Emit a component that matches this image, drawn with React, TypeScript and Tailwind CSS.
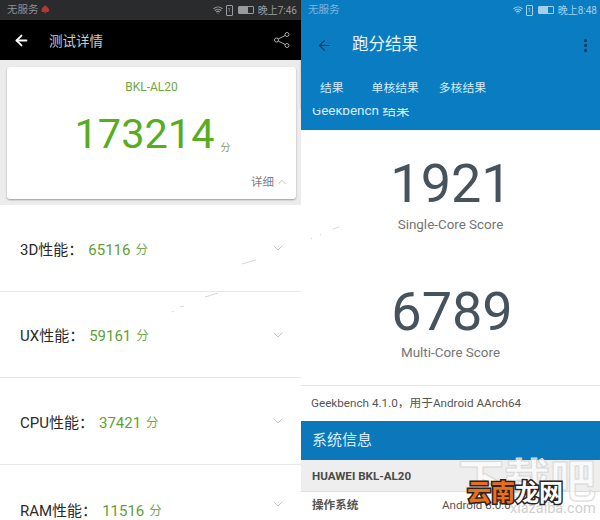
import { ArrowLeft, ChevronDown, ChevronUp, EllipsisVertical, Wifi } from "lucide-react";

const font = "font-['Roboto','Noto_Sans_CJK_SC',sans-serif]";

const rows = [
    { label: "3D性能：", score: "65116", height: "h-[87px]" },
    { label: "UX性能：", score: "59161", height: "h-[86px]" },
    { label: "CPU性能：", score: "37421", height: "h-[87px]" },
    { label: "RAM性能：", score: "11516", height: "h-[55px]" },
];

const StatusIcons = ({ time, tone }: { time: string; tone: string }) => (
    <div className={`flex items-center text-[10px] ${tone}`}>
        <Wifi size={10} strokeWidth={2.5} />
        <span className="ml-[3px] flex h-[11px] w-[7px] items-center justify-center rounded-[1px] border border-current text-[6px] leading-none">
            1
        </span>
        <span className="ml-[5px] flex h-[8px] w-[16px] rounded-[1px] border border-current">
            <span className="w-[9px] bg-current" />
        </span>
        <span className="ml-[4px]">{time}</span>
    </div>
);

const AntutuPanel = () => (
    <div className="flex w-[301px] flex-col">
        <div className="flex h-[20px] items-center justify-between bg-[#2a2b2d] pl-[7px] pr-[4px]">
            <div className="flex items-center gap-[2px] text-[10.5px] text-[#8f9092]">
                <span>无服务</span>
                <span className="text-[9px] leading-none text-[#b23a30]">♠</span>
            </div>
            <StatusIcons time="晚上7:46" tone="text-[#9a9b9d]" />
        </div>
        <div className="flex h-[40px] items-center bg-black pl-[13px] pr-[10px]">
            <ArrowLeft size={17} strokeWidth={2.5} className="text-white" />
            <span className="ml-[19px] flex-1 pt-[2px] text-[13.5px] text-[#c9c9c9]">测试详情</span>
            <svg width="18" height="18" viewBox="0 0 18 18" fill="none" stroke="#a8a8a8" strokeWidth="1">
                <circle cx="3.5" cy="9" r="2" />
                <circle cx="14" cy="3.5" r="2" />
                <circle cx="14" cy="14.5" r="2" />
                <path d="M5.2 8 12.2 4.5M5.2 10 12.2 13.5" />
            </svg>
        </div>
        <div className="bg-[#ececec] pb-[6px] pl-[7px] pr-[5px] pt-[7px]">
            <div className="flex h-[132px] flex-col items-center rounded-[3px] bg-white shadow-[0_1px_2px_rgba(0,0,0,0.35)]">
                <div className="mt-[12px] text-[12px] leading-[16px] text-[#6fa83f]">BKL-AL20</div>
                <div className="mt-[15px] flex items-end gap-[6px] pl-[2px] text-[#57ad1f]">
                    <span className="text-[41.5px] leading-[48px]">173214</span>
                    <span className="mb-[3px] text-[10px] leading-[14px] text-[#87987a]">分</span>
                </div>
                <div className="mt-auto mb-[9px] flex items-center gap-[1px] self-end pr-[7px] text-[11.5px] leading-[16px] text-[#808080]">
                    详细
                    <ChevronUp size={14} strokeWidth={1} className="text-[#999999]" />
                </div>
            </div>
        </div>
        <div className="flex flex-col bg-white">
            {rows.map((row) => (
                <div
                    key={row.label}
                    className={`flex items-center justify-between border-b border-[#e8e8e8] pl-[20px] pr-[15px] last:items-start last:border-b-0 last:pt-[31px] ${row.height}`}>
                    <div className="flex items-center pt-[4px] text-[15px] text-[#2a2a2a]">
                        <span>{row.label}</span>
                        <span className="ml-[5px] text-[#5f9f35]">{row.score}</span>
                        <span className="ml-[5px] text-[12.5px] text-[#78aa55]">分</span>
                    </div>
                    <ChevronDown size={16} strokeWidth={1} className="text-[#aaaaaa]" />
                </div>
            ))}
        </div>
    </div>
);

const GeekbenchPanel = () => (
    <div className="flex w-[299px] flex-col bg-white">
        <div className="bg-[#0a7dc2] shadow-[0_1px_2px_rgba(0,0,0,0.3)]">
            <div className="flex h-[20px] items-center justify-between pl-[7px] pr-[3px]">
                <span className="text-[10.5px] text-[#7ab8df]">无服务</span>
                <StatusIcons time="晚上8:48" tone="text-[#a4d0ec]" />
            </div>
            <div className="flex h-[47px] items-center pl-[15px] pr-[6px] pt-[3px]">
                <ArrowLeft size={17} strokeWidth={1.5} className="text-[#0b3f66]" />
                <span className="ml-[19px] flex-1 text-[16.5px] text-[#e6f3fb]">跑分结果</span>
                <EllipsisVertical size={17} strokeWidth={2.5} className="text-[#0b3556]" />
            </div>
            <div className="flex h-[41px] items-center gap-[20px] pl-[19px] pt-[3px] text-[11.8px] text-[#d3ebf8]">
                <span className="mr-[8px]">结果</span>
                <span>单核结果</span>
                <span>多核结果</span>
            </div>
        </div>
        <div className="flex h-[22px] items-start overflow-hidden bg-[#0a7dc2] pl-[11px]">
            <span className="-mt-[6px] text-[13.5px] leading-[16px] text-[#d8ecf8]">Geekbench 结果</span>
        </div>
        <div className="flex h-[256px] flex-col items-center border-b border-[#e6e6e6]">
            <div className="mt-[23px] pl-[1px] text-[54px] leading-[62px] text-[#46525c]">1921</div>
            <div className="mt-[2px] text-[13.4px] leading-[16px] text-[#757575]">Single-Core Score</div>
            <div className="mt-[48px] pl-[3px] text-[54px] leading-[62px] text-[#46525c]">6789</div>
            <div className="mt-[2px] text-[13.4px] leading-[16px] text-[#757575]">Multi-Core Score</div>
        </div>
        <div className="flex h-[35px] items-center pl-[10px] text-[11.7px] text-[#555555]">
            Geekbench 4.1.0，用于Android AArch64
        </div>
        <div className="flex h-[39px] items-center bg-[#0a78ba] pl-[11px] text-[15px] text-[#d9eefa]">
            系统信息
        </div>
        <div className="flex h-[32px] items-center border-b border-[#dddddd] bg-[#eeeeee] pl-[11px] pt-[2px] text-[11.6px] font-bold text-[#4a4a4a]">
            HUAWEI BKL-AL20
        </div>
        <div className="flex h-[28px] items-center pl-[11px] text-[11.6px] text-[#555555]">
            <span className="w-[130px] font-bold">操作系统</span>
            <span>Android 8.0.0</span>
        </div>
    </div>
);

export default function App() {
    return (
        <div className={`relative flex h-[520px] w-[600px] overflow-hidden ${font}`}>
            <AntutuPanel />
            <GeekbenchPanel />
            {/* scratches left over across the seam of the two screenshots */}
            <svg className="absolute left-[150px] top-[220px]" width="200" height="100" fill="none" stroke="#c4c4c4" strokeWidth="0.7">
                <path d="M92 44 106 40M55 77 68 73M30 87 34 86M22 92 24 91M161 19 162 18M170 15 171 14.5M183 9 189 7" />
            </svg>
            <div className="absolute left-[458px] top-[456px] text-[46px] font-bold leading-[50px] text-white/70 [-webkit-text-stroke:1px_#d8d8d8]">
                下载吧
            </div>
            <div className="absolute left-[510px] top-[502px] text-[14.5px] leading-[14px] text-[#d0d0d0]">
                xiazaiba.com
            </div>
            <div className="absolute left-[467px] top-[479px] flex text-[24px] font-bold leading-[28px] [-webkit-text-stroke:3px_#2b2320] [paint-order:stroke_fill]">
                <span className="text-[#e8701a]">云南</span>
                <span className="text-white">龙网</span>
            </div>
        </div>
    );
}
